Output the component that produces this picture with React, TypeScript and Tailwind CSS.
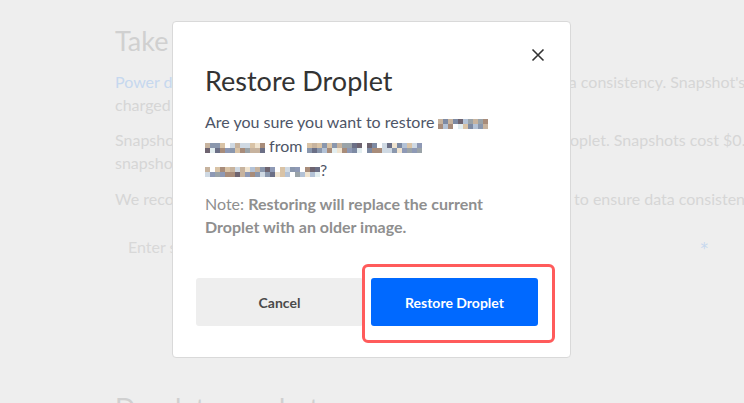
import React from 'react';

// deterministic "blurred" mosaic for redacted names
const PALETTE = [
  '#6b6f86', '#7d8aa3', '#8a97ad', '#b3c2d6', '#cfd9e3', '#e3eef0', '#c7b39e',
  '#a88c7a', '#6e6470', '#9aa3a8', '#d9c3a6', '#f0e4d0', '#ffffff', '#8e99b5',
];

const Mosaic: React.FC<{ cols: number; seed: number; gap?: number }> = ({ cols, seed, gap }) => {
  let s = seed;
  const rnd = () => {
    s = (s * 9301 + 49297) % 233280;
    return s / 233280;
  };
  const cells: React.ReactNode[] = [];
  for (let c = 0; c < cols; c++) {
    if (c === gap) continue;
    for (let r = 0; r < 2; r++) {
      const color = PALETTE[Math.floor(rnd() * PALETTE.length)];
      cells.push(<rect key={`${c}-${r}`} x={c * 5} y={r * 5} width={5} height={5} fill={color} />);
    }
  }
  return (
    <svg width={cols * 5} height={10} className="inline-block align-baseline translate-y-[1px]">
      {cells}
    </svg>
  );
};

export default function App() {
  return (
    <div className="relative w-[744px] h-[403px] overflow-hidden bg-[#eeeeee] font-['Lato',sans-serif]">
      {/* Page behind the dialog */}
      <div className="pl-[115px] pt-[24px] whitespace-nowrap text-[16px] leading-[23px] text-[#d6d6d6]">
        <h2 className="text-[27px] leading-[34px] text-[#d0d0d0]">Take a snapshot</h2>
        <p className="mt-[12px]">
          <span className="text-[#c6d8ef]">Power down your Droplet</span> before taking a snapshot to ensure data consistency. Snapshot's are
          <br />
          charged <span className="text-[#c6d8ef]">based on</span> the space they use.
        </p>
        <p className="mt-[12px]">
          Snapshots are on-demand disk images of the full DigitalOcean Droplet. Snapshots cost $0.05/GB per month
          <br />
          snapshots are charged based on the size of the snapshot.
        </p>
        <p className="mt-[13px]">
          We recommend you power down your Droplet before a snapshot to ensure data consistency.
        </p>
        <div className="mt-[25px] ml-[13px] w-[580px] flex items-center justify-between">
          <span className="text-[#d8d8d8]">Enter snapshot name</span>
          <span className="font-['DejaVu_Sans',sans-serif] text-[15px] leading-[23px] translate-y-[3px] text-[#c6d8ef]">*</span>
        </div>
        <h2 className="mt-[133px] text-[27px] leading-[34px] text-[#d0d0d0]">Droplet snapshots</h2>
      </div>

      {/* Dialog */}
      <div className="absolute left-[172px] top-[21px] w-[399px] h-[337px] bg-white border border-[#d9d9d9] rounded-[4px] px-[32px] pt-[43px] pb-[31px] flex flex-col">
        <button className="absolute top-[26px] right-[25px] w-[14px] h-[14px] text-[#333]">
          <svg width="14" height="14" viewBox="0 0 14 14" fill="none" stroke="currentColor" strokeWidth="1.6">
            <path d="M1.5 1.5 L12.5 12.5 M12.5 1.5 L1.5 12.5" />
          </svg>
        </button>
        <h1 className="text-[27px] leading-[32px] text-[#333333]">Restore Droplet</h1>
        <p className="mt-[13px] text-[16px] leading-[24px] text-[#4e5567] whitespace-nowrap">
          Are you sure you want to restore <Mosaic cols={10} seed={7} />
          <br />
          <Mosaic cols={12} seed={31} /> from <Mosaic cols={23} seed={113} gap={11} />
          <br />
          <Mosaic cols={23} seed={57} />?
        </p>
        <p className="mt-[10px] text-[16px] leading-[23px] text-[#8f8f8f] whitespace-nowrap">
          Note: <span className="font-bold">Restoring will replace the current</span>
          <br />
          <span className="font-bold">Droplet with an older image.</span>
        </p>
        <div className="mt-auto -mx-[9px] pr-[9px] flex justify-end gap-2">
          <button className="shrink-0 w-[167px] h-[48px] rounded-[3px] bg-[#eeeeee] text-[14px] font-bold text-[#4a4a4a]">
            Cancel
          </button>
          <div className="relative shrink-0">
            <button className="w-[167px] h-[48px] rounded-[3px] bg-[#0069ff] text-[14px] font-bold text-white">
              Restore Droplet
            </button>
            <div className="absolute -left-[9px] -right-[17px] -top-[14px] -bottom-[17px] border-[3px] border-[#ff5b5b] rounded-[6px]" />
          </div>
        </div>
      </div>
    </div>
  );
}
